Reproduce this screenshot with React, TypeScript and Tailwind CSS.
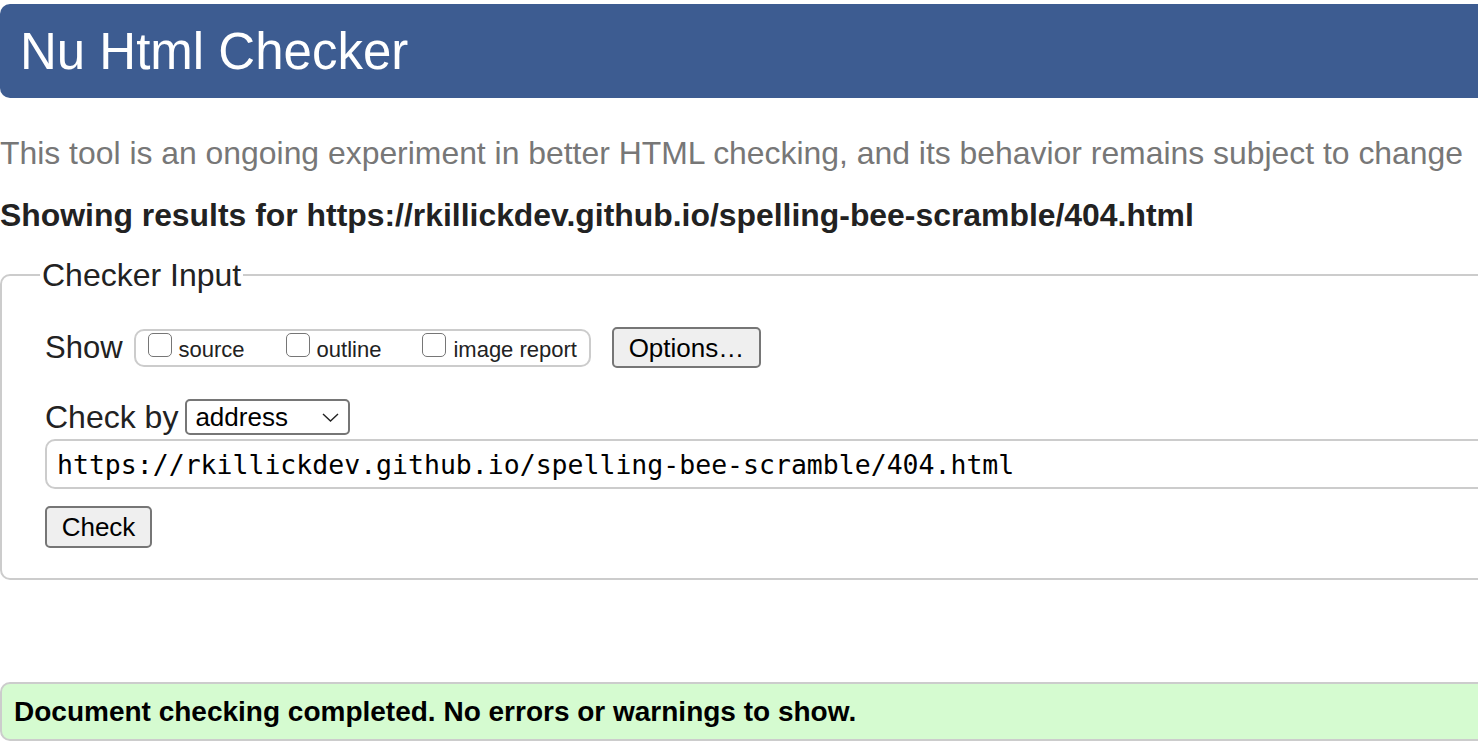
import { useState } from "react";

const sans = "font-['Liberation_Sans',Arial,sans-serif]";

function Box({ label, first }: { label: string; first?: boolean }) {
  const [on, setOn] = useState(false);
  return (
    <label className={`flex items-start gap-[7px] cursor-pointer ${first ? "" : "ml-[41px]"}`}>
      <span
        onClick={() => setOn(!on)}
        className={`mt-[1px] w-[24px] h-[24px] rounded-[5px] border-[1.5px] border-[#767676] bg-white ${on ? "bg-[#0a66d8]" : ""}`}
      />
      <span className="mt-[5px] text-[22px] leading-[26px] text-[#222]">{label}</span>
    </label>
  );
}

export default function App() {
  const [url, setUrl] = useState("https://rkillickdev.github.io/spelling-bee-scramble/404.html");

  return (
    <div className={`w-full h-[742px] overflow-hidden bg-white ${sans}`}>
      <div className="w-[1600px]">
        {/* Title bar */}
        <div className="mt-[4px] h-[94px] rounded-l-[10px] bg-[#3d5c91] pl-[20px] pt-[22px]">
          <h1 className="text-[51px] leading-none text-white">Nu Html Checker</h1>
        </div>

        <p className="mt-[37px] text-[31.9px] leading-[36px] text-[#777]">
          This tool is an ongoing experiment in better HTML checking, and its behavior remains subject to change
        </p>

        <p className="mt-[26px] text-[31.9px] leading-[36px] font-bold text-[#222]">
          Showing results for https://rkillickdev.github.io/spelling-bee-scramble/404.html
        </p>

        {/* Checker input */}
        <fieldset className="mt-[24px] border-2 border-[#ccc] rounded-l-[10px] pl-[43px] pt-[34px] pb-[30px]">
          <legend className="ml-[-5px] px-[2px] text-[32px] leading-[36px] text-[#222]">Checker Input</legend>

          <div className="flex items-center h-[41px]">
            <span className="text-[31px] leading-[36px] text-[#222]">Show</span>
            <div className="ml-[11px] h-[38px] flex items-start border-2 border-[#ccc] rounded-[10px] pl-[12px] pr-[12px] pt-[1px]">
              <Box label="source" first />
              <Box label="outline" />
              <Box label="image report" />
            </div>
            <button
              type="button"
              className="ml-[21px] w-[149px] h-[41px] rounded-[5px] border-2 border-[#767676] bg-[#efefef] text-[26px] leading-none text-black"
            >
              Options…
            </button>
          </div>

          <div className="mt-[31px] flex items-center h-[36px]">
            <span className="text-[32px] leading-[36px] text-[#222]">Check by</span>
            <div className="ml-[7px] w-[165px] h-[36px] flex items-center justify-between rounded-[5px] border-2 border-[#767676] pl-[8px] pr-[8px]">
              <span className="text-[26px] leading-none text-black">address</span>
              <svg width="17" height="9" viewBox="0 0 17 9" fill="none" className="mr-[1px]">
                <path d="M1 1l7.5 7L16 1" stroke="#222" strokeWidth="1.4" />
              </svg>
            </div>
          </div>

          <input
            type="text"
            value={url}
            onChange={(e) => setUrl(e.target.value)}
            className="mt-[4px] block w-[1600px] h-[50px] rounded-[10px] border-2 border-[#ccc] pl-[10px] font-['DejaVu_Sans_Mono',monospace] text-[26.5px] text-black outline-none"
            aria-label="Document URL"
          />

          <button
            type="button"
            className="mt-[17px] block w-[107px] h-[42px] rounded-[5px] border-2 border-[#767676] bg-[#efefef] text-[26px] leading-none text-black"
          >
            Check
          </button>
        </fieldset>

        {/* Result */}
        <div className="mt-[102px] h-[59px] flex items-center rounded-l-[10px] border-2 border-[#ccc] bg-[#d5fbd0] pl-[12px]">
          <p className="text-[28px] leading-none font-bold text-black">
            Document checking completed. No errors or warnings to show.
          </p>
        </div>
      </div>
    </div>
  );
}
